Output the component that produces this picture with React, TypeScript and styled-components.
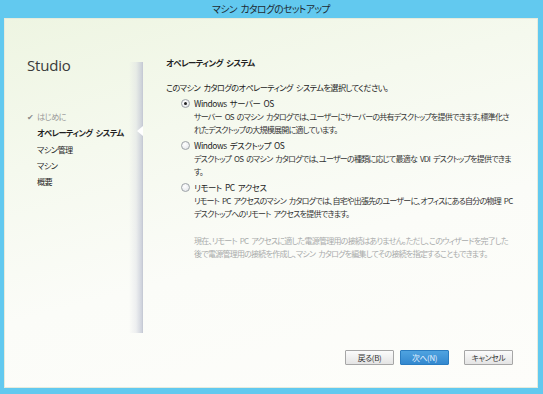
import React from "react";
import styled, { createGlobalStyle } from "styled-components";

const Global = createGlobalStyle`
  html, body { margin: 0; padding: 0; background: #62c9ef; }
  body { font-family: "Noto Sans CJK JP", "Noto Sans", sans-serif; }
`;

const jp = `"Noto Sans CJK JP", "Noto Sans", sans-serif`;

const Window = styled.div`
  width: 543px;
  height: 394px;
  background: #62c9ef;
  display: flex;
  flex-direction: column;
  box-sizing: border-box;
  padding: 0 5px 6px 4px;
  overflow: hidden;
`;

const TitleBar = styled.div`
  height: 18px;
  flex: none;
  display: flex;
  align-items: center;
  justify-content: center;
  font-family: ${jp};
  font-size: 9.8px;
  font-feature-settings: "palt";
  color: #1d2a33;
  letter-spacing: -0.6px;
  word-spacing: 2px;
`;

const Client = styled.div`
  flex: 1;
  min-height: 0;
  display: grid;
  grid-template-columns: 137px 1px minmax(0, 1fr);
  background: linear-gradient(165deg, #eef5e2 0%, #f5f9ee 30%, #fbfcf8 60%, #fdfdfa 100%);
  border: 1px solid #e6ebdc;
  box-sizing: border-box;
  font-family: ${jp};
  font-feature-settings: "palt";
`;

const Sidebar = styled.div`
  display: flex;
  flex-direction: column;
  padding: 36px 0 0 22px;
`;

const Brand = styled.div`
  font-family: "Open Sans", "Noto Sans", sans-serif;
  font-size: 15px;
  font-weight: 500;
  color: #3a3a3a;
  letter-spacing: -0.2px;
  margin-bottom: 33px;
`;

const NavList = styled.ul`
  list-style: none;
  margin: 0;
  padding: 0;
  display: flex;
  flex-direction: column;
`;

const NavItem = styled.li<{ $state: "done" | "active" | "todo" }>`
  height: 16.3px;
  display: flex;
  align-items: center;
  font-size: 8.2px;
  letter-spacing: -0.6px;
  word-spacing: 2px;
  padding-left: ${(p) => (p.$state === "done" ? "0" : "10px")};
  color: ${(p) => (p.$state === "done" ? "#9a9a9a" : "#1f1f1f")};
  font-weight: ${(p) => (p.$state === "active" ? 700 : 400)};
  white-space: pre;
`;

const Check = styled.span`
  width: 10px;
  color: #8a8a8a;
  font-size: 8px;
`;

const Divider = styled.div`
  position: relative;
  margin: 43px 0 54px;
  background: #c6cad5;
  &::before {
    content: "";
    position: absolute;
    top: 0;
    bottom: 0;
    right: 1px;
    width: 13px;
    background: linear-gradient(
      to right,
      rgba(220, 223, 232, 0),
      rgba(210, 213, 224, 0.35) 55%,
      rgba(190, 195, 210, 0.75)
    );
  }
`;

const Notch = styled.div`
  position: absolute;
  top: 64px;
  left: -5px;
  width: 0;
  height: 0;
  border-top: 5px solid transparent;
  border-bottom: 5px solid transparent;
  border-right: 6px solid #ffffff;
`;

const Main = styled.div`
  display: flex;
  flex-direction: column;
  padding: 36px 20px 0 23px;
  min-width: 0;
`;

const Heading = styled.div`
  font-size: 8.4px;
  font-weight: 700;
  color: #222;
  letter-spacing: -0.6px;
  word-spacing: 2px;
  line-height: 14px;
  margin-bottom: 12px;
  white-space: pre;
`;

const Intro = styled.div`
  font-size: 8.2px;
  letter-spacing: -0.6px;
  word-spacing: 2px;
  color: #222;
  line-height: 13px;
  margin-bottom: 2px;
  white-space: pre;
`;

const Options = styled.div`
  display: flex;
  flex-direction: column;
  gap: 2px;
  padding-left: 15px;
`;

const Option = styled.label`
  display: grid;
  grid-template-columns: 13px minmax(0, 1fr);
  align-items: start;
`;

const Radio = styled.span<{ $checked?: boolean }>`
  width: 9px;
  height: 9px;
  margin-top: 3px;
  border-radius: 50%;
  box-sizing: border-box;
  border: 1px solid #9ea3a8;
  background: radial-gradient(circle at 40% 35%, #ffffff 0%, #eceef0 60%, #d8dbde 100%);
  display: flex;
  align-items: center;
  justify-content: center;
  &::after {
    content: "";
    width: 3px;
    height: 3px;
    border-radius: 50%;
    background: ${(p) => (p.$checked ? "#222" : "transparent")};
  }
`;

const OptionText = styled.div`
  display: flex;
  flex-direction: column;
`;

const OptionLabel = styled.div`
  font-size: 8.4px;
  letter-spacing: -0.4px;
  word-spacing: 1.5px;
  color: #1d1d1d;
  line-height: 14px;
  height: 15px;
  white-space: pre;
`;

const Desc = styled.div`
  font-size: 8px;
  letter-spacing: -0.75px;
  word-spacing: 1.8px;
  color: #333;
  line-height: 12.5px;
  white-space: pre;
`;

const Note = styled.div`
  margin: 14px 0 0 28px;
  font-size: 8px;
  letter-spacing: -0.75px;
  word-spacing: 1.8px;
  color: #a9abab;
  line-height: 13px;
  white-space: pre;
`;

const ButtonRow = styled.div`
  margin-top: auto;
  margin-bottom: 22px;
  display: flex;
  justify-content: flex-end;
  padding-right: 4px;
`;

const Button = styled.button<{ $primary?: boolean; $gap?: number }>`
  width: 49px;
  height: 15px;
  margin-left: ${(p) => p.$gap ?? 0}px;
  padding: 0;
  font-family: ${jp};
  font-feature-settings: "palt";
  font-size: 7.8px;
  letter-spacing: -0.3px;
  line-height: 13px;
  border-radius: 1px;
  border: 1px solid ${(p) => (p.$primary ? "#2a7cc0" : "#a6a6a6")};
  background: ${(p) =>
    p.$primary
      ? "linear-gradient(#4fa3e0, #3388cf)"
      : "linear-gradient(#fbfbfb, #e4e4e4)"};
  color: ${(p) => (p.$primary ? "#e6f3ff" : "#333")};
`;

export default function App() {
  return (
    <Window>
      <Global />
      <TitleBar>マシン カタログのセットアップ</TitleBar>
      <Client>
        <Sidebar>
          <Brand>Studio</Brand>
          <NavList>
            <NavItem $state="done">
              <Check>✔</Check>はじめに
            </NavItem>
            <NavItem $state="active">オペレーティング システム</NavItem>
            <NavItem $state="todo">マシン管理</NavItem>
            <NavItem $state="todo">マシン</NavItem>
            <NavItem $state="todo">概要</NavItem>
          </NavList>
        </Sidebar>
        <Divider>
          <Notch />
        </Divider>
        <Main>
          <Heading>オペレーティング システム</Heading>
          <Intro>このマシン カタログのオペレーティング システムを選択してください。</Intro>
          <Options>
            <Option>
              <Radio $checked />
              <OptionText>
                <OptionLabel>Windows サーバー OS</OptionLabel>
                <Desc>
                  サーバー OS のマシン カタログでは、ユーザーにサーバーの共有デスクトップを提供できます。標準化さ
                </Desc>
                <Desc>れたデスクトップの大規模展開に適しています。</Desc>
              </OptionText>
            </Option>
            <Option>
              <Radio />
              <OptionText>
                <OptionLabel>Windows デスクトップ OS</OptionLabel>
                <Desc>
                  デスクトップ OS のマシン カタログでは、ユーザーの種類に応じて最適な VDI デスクトップを提供できま
                </Desc>
                <Desc>す。</Desc>
              </OptionText>
            </Option>
            <Option>
              <Radio />
              <OptionText>
                <OptionLabel>リモート PC アクセス</OptionLabel>
                <Desc>
                  リモート PC アクセスのマシン カタログでは、自宅や出張先のユーザーに、オフィスにある自分の物理 PC
                </Desc>
                <Desc>デスクトップへのリモート アクセスを提供できます。</Desc>
              </OptionText>
            </Option>
          </Options>
          <Note>
            {"現在、リモート PC アクセスに適した電源管理用の接続はありません。ただし、このウィザードを完了した\n後で電源管理用の接続を作成し、マシン カタログを編集してその接続を指定することもできます。"}
          </Note>
          <ButtonRow>
            <Button>戻る(B)</Button>
            <Button $primary $gap={6}>
              次へ(N)
            </Button>
            <Button $gap={15}>キャンセル</Button>
          </ButtonRow>
        </Main>
      </Client>
    </Window>
  );
}
